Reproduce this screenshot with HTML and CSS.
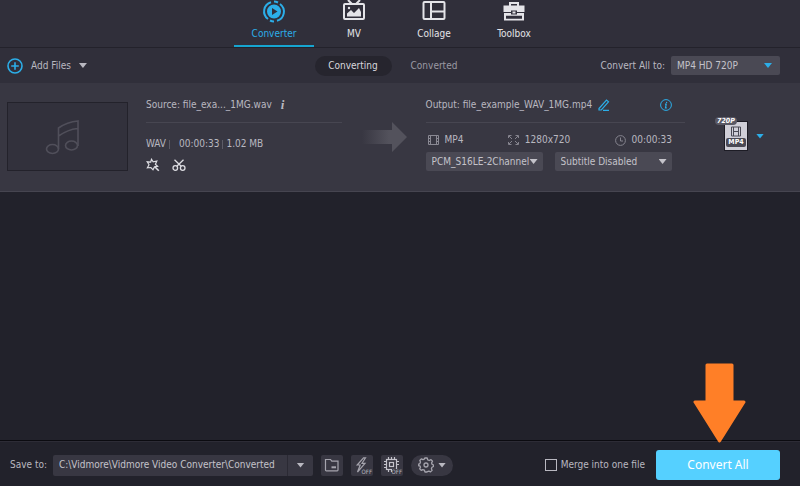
FILE: index.html
```html
<!DOCTYPE html>
<html lang="en">
<head>
    <meta charset="UTF-8">
    <meta name="viewport" content="width=device-width, initial-scale=1.0">
    <title>Video Converter</title>
    <link rel="stylesheet" href="styles.css">
</head>
<body>

    <nav class="tabs">
        <a href="#converter" class="tab active">
            <svg width="24" height="24" viewBox="0 0 24 24" fill="none" stroke="currentColor" stroke-width="2">
                <path d="M9 2.200A9.500 9.500 0 0 0 6 19M12 1.500q2 0 4 1M12 21.500q-2 0-4-1M15 20.800A9.500 9.500 0 0 0 18 4"/>
                <circle cx="12" cy="11.500" r="6" fill="currentColor"/>
                <path d="M10 8v7l5.500-3.500z" fill="#302f3a" stroke="none"/>
            </svg>
            <span>Converter</span>
        </a>
        <a href="#mv" class="tab">
            <svg width="24" height="24" viewBox="0 0 24 24" fill="none" stroke="currentColor" stroke-width="2">
                <path d="M6 0l4 4M18 0l-4 4"/>
                <rect x="2" y="4" width="20" height="15" rx="1"/>
                <path d="M5 16.500v-3l4-3.500 3 3 5-5 2 4v4.500z" fill="currentColor" stroke="none"/>
                <circle cx="7" cy="8" r="1.200" fill="currentColor" stroke="none"/>
            </svg>
            <span>MV</span>
        </a>
        <a href="#collage" class="tab">
            <svg width="24" height="24" viewBox="0 0 24 24" fill="none" stroke="currentColor" stroke-width="2">
                <rect x="1.500" y="2" width="21" height="17" rx="1"/>
                <path d="M9 2v17M9 11.500h13"/>
            </svg>
            <span>Collage</span>
        </a>
        <a href="#toolbox" class="tab">
            <svg width="24" height="24" viewBox="0 0 24 24" fill="currentColor">
                <path d="M7 6V2h10v4h-2V4H9v2z"/>
                <path d="M1.500 5.500h21V12H15v-1.500H9V12H1.500z"/>
                <path d="M10.500 11.500h3v2h-3z"/>
                <path d="M2 13h7v1.500h6V13h7v7.500H2zM4 15.800v2.900h16v-2.900z" fill-rule="evenodd"/>
            </svg>
            <span>Toolbox</span>
        </a>
    </nav>

    <header class="toolbar">
        <button type="button" class="add-files">
            <svg width="16" height="16" viewBox="0 0 16 16" fill="none" stroke="#2caee8" stroke-width="1.600">
                <circle cx="8" cy="8" r="7"/>
                <path d="M8 4.200v7.600M4.200 8h7.600"/>
            </svg>
            <span>Add Files</span>
            <i class="caret"></i>
        </button>
        <div class="switch">
            <button type="button" class="pill active">Converting</button>
            <button type="button" class="pill">Converted</button>
        </div>
        <div class="convert-to">
            <label for="profile">Convert All to:</label>
            <div class="select blue">
                <select id="profile">
                    <option>MP4 HD 720P</option>
                </select>
            </div>
        </div>
    </header>

    <main class="files">
        <article class="file">
            <div class="thumb">
                <svg width="36" height="36" viewBox="0 0 36 36" fill="none" stroke="#504f5a" stroke-width="1.600">
                    <ellipse cx="7.500" cy="30" rx="6" ry="4.500"/>
                    <ellipse cx="26.500" cy="26.500" rx="6" ry="4.500"/>
                    <path d="M13.500 30V9Q22 3 33 2v25M13.500 17Q23 10.500 32.500 9.500"/>
                </svg>
            </div>

            <section class="source">
                <div class="title">
                    <span>Source: file_exa..._1MG.wav</span>
                    <button type="button" class="icon-btn info" aria-label="Source info">i</button>
                </div>
                <div class="meta">
                    <span>WAV</span>
                    <span>00:00:33</span>
                    <span>1.02 MB</span>
                </div>
                <div class="tools">
                    <button type="button" class="icon-btn" aria-label="Edit effects">
                        <svg width="14" height="14" viewBox="0 0 14 14" fill="none" stroke="#dddde2" stroke-width="1.200">
                            <path d="M5.500 1.300l1.700 2.500 3.600-.8-1.400 3.300 2.200 2-3.100.6-1.500 2.900L4.900 9.500l-3.500.3L3 6.800 1.200 3.800l3.500.4z"/>
                            <path d="M9 9l3.800 3.800" stroke-width="1.600"/>
                        </svg>
                    </button>
                    <button type="button" class="icon-btn" aria-label="Cut">
                        <svg width="14" height="14" viewBox="0 0 14 14" fill="none" stroke="#dddde2" stroke-width="1.300">
                            <circle cx="3.300" cy="10" r="2.300"/>
                            <circle cx="10.700" cy="10" r="2.300"/>
                            <path d="M2.500 1.800l6.700 6.500M11.500 1.800L4.800 8.300"/>
                        </svg>
                    </button>
                </div>
            </section>

            <svg class="flow" width="46" height="32" viewBox="0 0 46 32">
                <defs>
                    <linearGradient id="fade">
                        <stop offset="0" stop-color="#53525c" stop-opacity="0"/>
                        <stop offset="0.600" stop-color="#53525c"/>
                    </linearGradient>
                </defs>
                <path d="M0 9h30V1l15 15-15 15v-8H0z" fill="url(#fade)"/>
            </svg>

            <section class="output">
                <div class="title">
                    <span>Output: file_example_WAV_1MG.mp4</span>
                    <button type="button" class="icon-btn" aria-label="Rename">
                        <svg width="12" height="12" viewBox="0 0 12 12" fill="none" stroke="#2caee8" stroke-width="1.200">
                            <path d="M1 9.500L8.500 1l2 1.800L3.300 11H1zM5 11.300h6"/>
                        </svg>
                    </button>
                    <button type="button" class="icon-btn details" aria-label="Output info">
                        <svg width="12" height="12" viewBox="0 0 12 12" fill="none" stroke="#2caee8">
                            <circle cx="6" cy="6" r="5.400"/>
                            <path d="M6.700 2.800l-.2 1.200M5 5.200h1.200L5.500 8.800h1.300" stroke-width="1.200"/>
                        </svg>
                    </button>
                </div>
                <div class="specs">
                    <span class="spec">
                        <svg width="11" height="10" viewBox="0 0 11 10" fill="none" stroke="#8a8993">
                            <path d="M.5 .5h10v9H.5zM2.500 .5v9M8.500 .5v9M.5 3.500h2M.5 6.500h2M8.500 3.500h2M8.500 6.500h2"/>
                        </svg>
                        MP4
                    </span>
                    <span class="spec">
                        <svg width="11" height="10" viewBox="0 0 11 10" fill="none" stroke="#85848e">
                            <path d="M.5 3V.5h3M7.500.5h3V3M.5 7v2.500h3M7.500 9.500h3V7M1 1l3 3M10 1L7 4M1 9l3-3M10 9L7 6"/>
                        </svg>
                        1280x720
                    </span>
                    <span class="spec">
                        <svg width="11" height="11" viewBox="0 0 11 11" fill="none" stroke="#85848e">
                            <circle cx="5.500" cy="5.500" r="4.900"/>
                            <path d="M5.500 2.500V6H8"/>
                        </svg>
                        00:00:33
                    </span>
                </div>
                <div class="tracks">
                    <div class="select">
                        <select aria-label="Audio track">
                            <option>PCM_S16LE-2Channel</option>
                        </select>
                    </div>
                    <div class="select">
                        <select aria-label="Subtitle">
                            <option>Subtitle Disabled</option>
                        </select>
                    </div>
                </div>
            </section>

            <button type="button" class="format" aria-label="Output format">
                <span class="format-card">
                    <svg width="10" height="11" viewBox="0 0 10 11" fill="none" stroke="#4a4954">
                        <path d="M.5 1h9v9h-9zM2.500 1v9M7.500 1v9M2.500 5.500h5"/>
                    </svg>
                    <span class="format-name">MP4</span>
                    <span class="format-badge">720P</span>
                </span>
                <i class="caret blue"></i>
            </button>
        </article>
    </main>

    <footer class="bottom">
        <label for="path">Save to:</label>
        <div class="path">
            <input type="text" id="path" value="C:\Vidmore\Vidmore Video Converter\Converted">
            <button type="button" class="path-more" aria-label="Recent folders"><i class="caret"></i></button>
        </div>
        <div class="options">
            <button type="button" class="option" aria-label="Open folder">
                <svg width="16" height="14" viewBox="0 0 16 14" fill="none" stroke="#a5a4ad" stroke-width="1.200">
                    <path d="M1.500 12V1.500h5l1.300 1.700H14V12q0 .8-.8.8H2.300Q1.500 12.800 1.500 12z"/>
                    <path d="M7.500 9.300h4.500" stroke-width="2"/>
                </svg>
            </button>
            <button type="button" class="option" aria-label="Hardware acceleration">
                <svg width="14" height="16" viewBox="0 0 14 16" fill="none" stroke="#a5a4ad" stroke-width="1.200">
                    <path d="M8.500.8L2.200 8h3L2.500 15 10 6.300H7L10.500.8z"/>
                </svg>
                <span class="off">OFF</span>
            </button>
            <button type="button" class="option" aria-label="GPU">
                <svg width="16" height="16" viewBox="0 0 16 16" fill="none" stroke="#c4c3cb" stroke-width="1.200">
                    <rect x="2.500" y="2.500" width="10" height="10"/>
                    <rect x="5.500" y="5.500" width="4" height="4"/>
                    <path d="M4.500 0v2.500M7.500 0v2.500M10.500 0v2.500M4.500 12.500V15M7.500 12.500V15M0 4.500h2.500M0 7.500h2.500M0 10.500h2.500M12.500 4.500H15M12.500 7.500H15"/>
                </svg>
                <span class="off">OFF</span>
            </button>
            <button type="button" class="settings" aria-label="Preferences">
                <svg width="16" height="16" viewBox="0 0 16 16" fill="none" stroke="#a5a4ad" stroke-width="1.300" stroke-linejoin="round">
                    <path d="M6.800 1h2.400l.5 1.800 1.600.7 1.700-.9 1.500 1.700-.9 1.600.6 1.500 1.300.6v1.500l-1.500.8-.6 1.500.7 1.600-1.600 1.500-1.600-.8-1.500.6L9 15H7l-.6-1.800-1.600-.6-1.600.8-1.500-1.600.8-1.600-.6-1.400L.7 8.800V7.200l1.200-.6.6-1.500-.7-1.600 1.500-1.600 1.700.8 1.300-.6z"/>
                    <circle cx="8" cy="8" r="2"/>
                </svg>
                <i class="caret"></i>
            </button>
        </div>
        <label class="merge"><input type="checkbox"> Merge into one file</label>
        <div class="convert">
            <svg class="pointer" width="54" height="80" viewBox="0 0 54 80">
                <path d="M15 2h25v37h12L27.500 78 3 39h12z" fill="#ff7f27" stroke="#ff7f27" stroke-width="3" stroke-linejoin="round"/>
            </svg>
            <button type="button" class="convert-all">Convert All</button>
        </div>
    </footer>

</body>
</html>
```
FILE: styles.css
```css
* {
    box-sizing: border-box;
}
body {
    display: flex;
    flex-direction: column;
    min-height: 100vh;
    margin: 0;
    background-color: #22222b;
    color: #b9b8c0;
    font-family: "DejaVu Sans Condensed", "DejaVu Sans", sans-serif;
    font-size: 10px;
    line-height: 16px;
}
button, input, select {
    margin: 0;
    padding: 0;
    border: none;
    background: none;
    color: inherit;
    font: inherit;
}
button {
    cursor: pointer;
}
svg {
    flex: none;
}
.caret {
    width: 8px;
    height: 5px;
    background-color: #b9b8c0;
    clip-path: polygon(0 0, 100% 0, 50% 100%);
}
.caret.blue {
    background-color: #2caee8;
}

/* tabs */
.tabs {
    display: flex;
    justify-content: center;
    padding-right: 12px;
    background-color: #302f3a;
    border-bottom: 1px solid #23222b;
}
.tab {
    display: flex;
    flex-direction: column;
    align-items: center;
    gap: 2px;
    width: 80px;
    height: 47px;
    border-bottom: 2px solid transparent;
    color: #e4e4e8;
    text-decoration: none;
}
.tab.active {
    color: #2caee8;
    border-bottom-color: #16a5d0;
}

/* toolbar */
.toolbar {
    display: grid;
    grid-template-columns: 1fr auto 1fr;
    align-items: center;
    height: 35px;
    padding: 0 20px 0 7px;
    background-color: #302f3a;
}
.add-files {
    display: flex;
    align-items: center;
    justify-self: start;
    gap: 8px;
}
.switch {
    display: flex;
    gap: 4px;
}
.pill {
    width: 77px;
    height: 20px;
    border-radius: 10px;
    color: #9a99a3;
}
.pill.active {
    background-color: #26252e;
    color: #d8d8dd;
}
.convert-to {
    display: flex;
    align-items: center;
    justify-self: end;
    gap: 6px;
}
.select {
    position: relative;
    width: 117px;
}
.select select {
    display: block;
    width: 100%;
    height: 19px;
    padding: 0 6px;
    appearance: none;
    background-color: #4a4954;
    border-radius: 2px;
    color: #c4c3ca;
}
.select::after {
    content: "";
    position: absolute;
    top: 7px;
    right: 5px;
    width: 8px;
    height: 5px;
    background-color: #c4c3ca;
    clip-path: polygon(0 0, 100% 0, 50% 100%);
    pointer-events: none;
}
.select.blue {
    width: 109px;
}
.select.blue::after {
    right: 8px;
    background-color: #2caee8;
}

/* file list */
.files {
    flex: 1;
}
.file {
    display: flex;
    padding: 14px 36px 19px 7px;
    background-color: #383742;
    border-bottom: 1px solid #464550;
}
.thumb {
    display: flex;
    align-items: center;
    justify-content: center;
    width: 121px;
    height: 69px;
    margin: 5px 18px 0 0;
    padding-right: 10px;
    background-color: #32313c;
    border: 1px solid #23222b;
}
.source {
    flex: 196;
}
.output {
    flex: 260;
}
.title {
    display: flex;
    align-items: center;
    gap: 6px;
    padding-bottom: 9px;
    border-bottom: 1px solid #474651;
    white-space: nowrap;
}
.icon-btn {
    display: flex;
}
.info {
    padding: 0 3px;
    font-family: "Liberation Serif", serif;
    font-size: 13px;
    font-style: italic;
    font-weight: bold;
    line-height: 16px;
}
.details {
    margin: 0 13px 0 auto;
}
.meta {
    display: flex;
    margin-top: 13px;
}
.meta span + span {
    margin-left: 3px;
    padding-left: 4px;
    background: linear-gradient(#5c5b66, #5c5b66) 0 4px / 1px 9px no-repeat;
}
.meta span:nth-child(2) {
    padding-left: 10px;
}
.tools {
    display: flex;
    gap: 12px;
    margin-top: 6px;
}
.flow {
    margin: 24px 18px 0 20px;
}
.specs {
    display: flex;
    justify-content: space-between;
    margin: 9px 13px 0 2px;
}
.spec {
    display: flex;
    align-items: center;
    gap: 6px;
}
.tracks {
    display: flex;
    gap: 12px;
    margin-top: 4px;
}
.format {
    display: flex;
    align-items: center;
    align-self: flex-start;
    gap: 8px;
    margin: 24px 0 0 39px;
}
.format-card {
    position: relative;
    display: flex;
    flex-direction: column;
    align-items: center;
    justify-content: flex-end;
    gap: 1px;
    width: 24px;
    height: 30px;
    padding-bottom: 3px;
    background-color: #d0cfd8;
    border: 1px solid #1d1c25;
}
.format-name {
    width: 20px;
    background-color: #4a4954;
    border-radius: 2px;
    color: #fff;
    font-size: 7px;
    font-weight: bold;
    line-height: 9px;
}
.format-badge {
    position: absolute;
    top: -5px;
    left: -10px;
    padding: 0 2px;
    background-color: #5a5965;
    border-radius: 4px;
    color: #fff;
    font-size: 7px;
    font-style: italic;
    font-weight: bold;
    line-height: 8px;
}

/* bottom bar */
.bottom {
    display: flex;
    align-items: center;
    height: 46px;
    padding: 3px 20px 0 10px;
    border-top: 1px solid #0b0b10;
    box-shadow: inset 0 1px 0 #2d2c36;
}
.path {
    display: flex;
    width: 260px;
    height: 21px;
    margin-left: 6px;
    background-color: #383742;
    border-radius: 2px;
}
.path input {
    flex: 1;
    min-width: 0;
    padding-left: 6px;
    color: #c4c3ca;
}
.path-more {
    display: flex;
    align-items: center;
    justify-content: center;
    width: 26px;
    border-left: 1px solid #2b2a34;
}
.options {
    display: flex;
    gap: 8px;
    margin-left: 8px;
}
.option {
    position: relative;
    display: flex;
    align-items: center;
    justify-content: center;
    width: 22px;
    height: 21px;
    background-color: #383742;
    border-radius: 2px;
}
.off {
    position: absolute;
    right: 1px;
    bottom: 1px;
    background-color: #383742;
    font-size: 6px;
    line-height: 6px;
}
.settings {
    display: flex;
    align-items: center;
    justify-content: center;
    gap: 4px;
    width: 42px;
    height: 21px;
    background-color: #383742;
    border-radius: 11px;
}
.merge {
    display: flex;
    align-items: center;
    gap: 4px;
    margin-left: auto;
}
.merge input {
    width: 12px;
    height: 12px;
    appearance: none;
    border: 1px solid #b9b8c0;
}
.convert {
    position: relative;
    margin-left: 11px;
}
.convert-all {
    display: block;
    width: 124px;
    height: 30px;
    background-color: #55d0ff;
    border-radius: 3px;
    color: #fff;
    font-family: "Noto Sans", sans-serif;
    font-size: 12px;
}
.pointer {
    position: absolute;
    bottom: 37px;
    left: 36px;
}
```
